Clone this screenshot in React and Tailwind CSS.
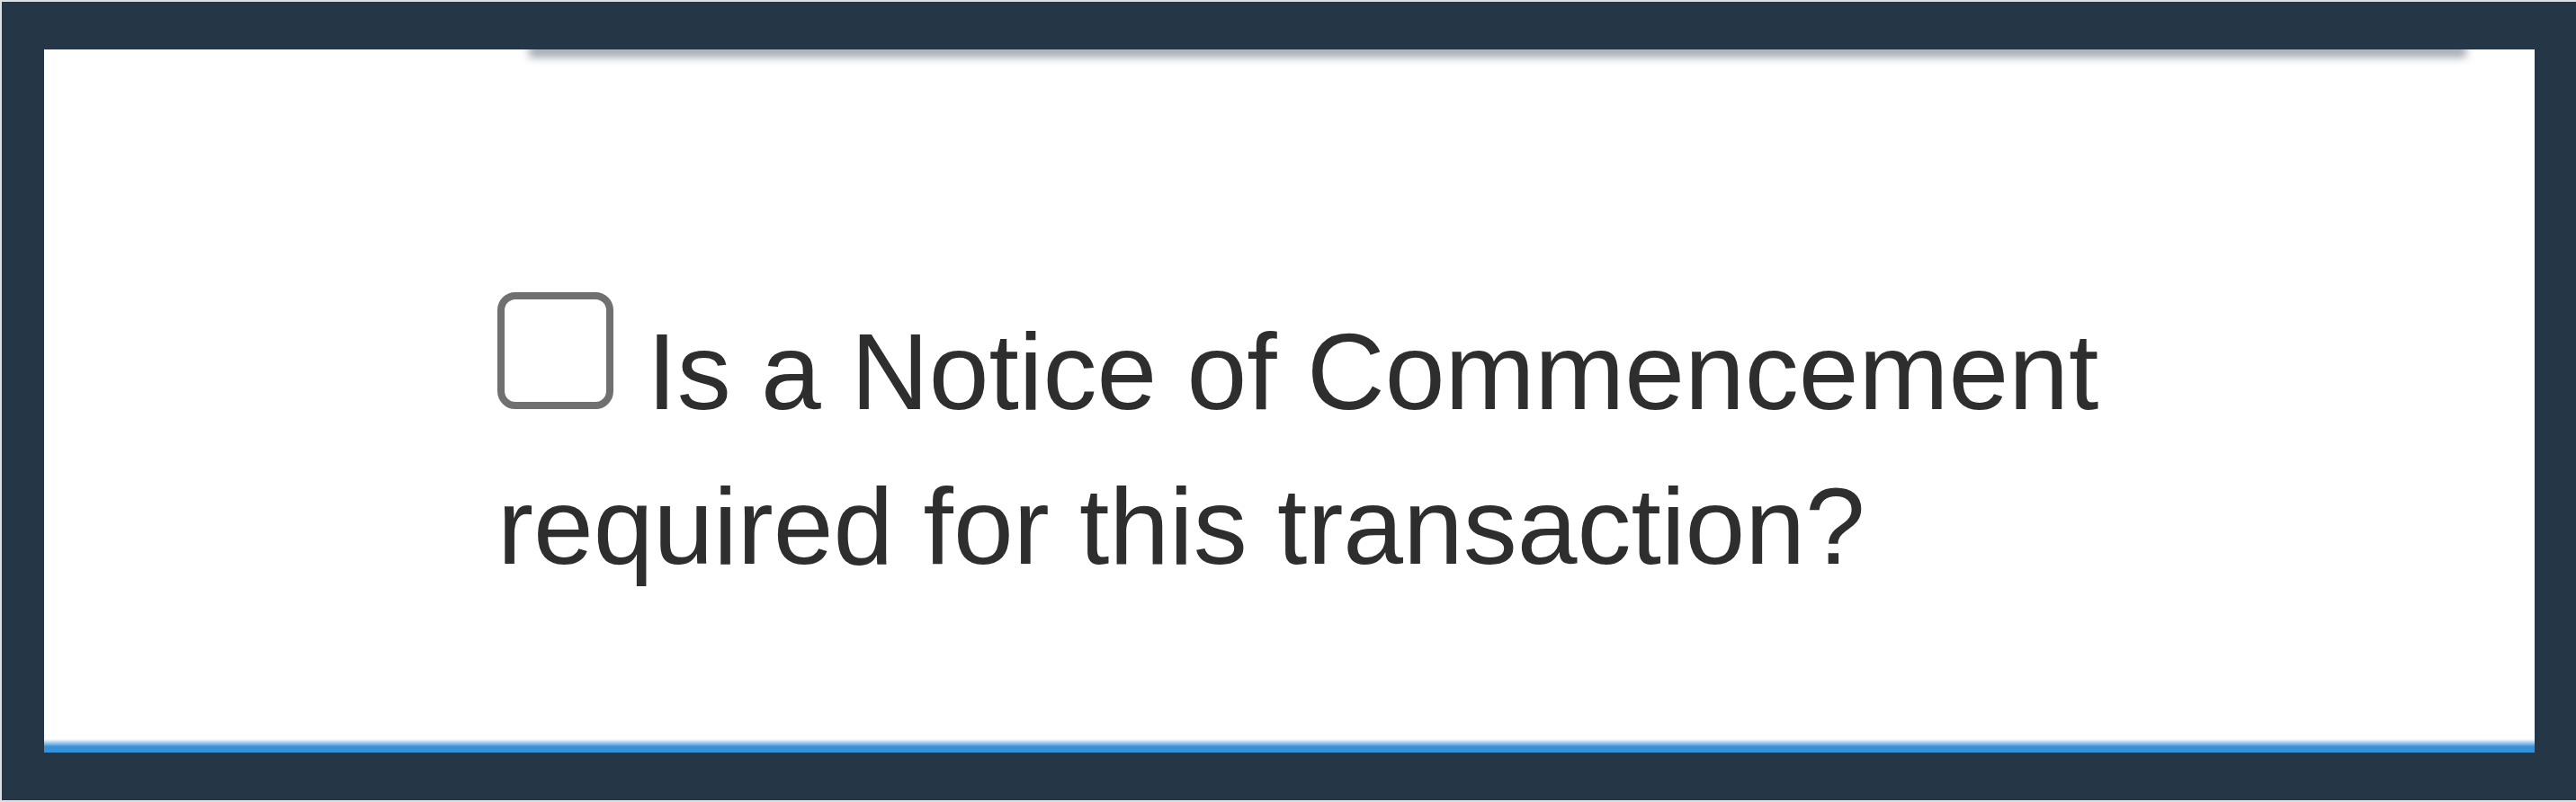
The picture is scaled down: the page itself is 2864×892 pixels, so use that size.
import React, { useState } from 'react';

const App = () => {
    const [checked, setChecked] = useState(false);

    return (
        <div className="w-[2864px] h-[892px] bg-[#253647] border-t-2 border-l-2 border-b-2 border-[#dde1e4] pl-[47px] pt-[53px] pr-[46px] pb-[53px]">
            <div className="h-[782px] bg-white overflow-hidden flex flex-col">
                <div className="ml-[539px] mr-[76px] h-[14px] -mt-[5px] bg-[#a3aab1] blur-[5px]" />

                <div className="flex-1 pl-[504px] pt-[261px]">
                    <p
                        className="w-[2000px] text-[120px] leading-[172px] text-[#2e2e2e] font-['Liberation_Sans',Arial,sans-serif] cursor-pointer"
                        onClick={() => setChecked(!checked)}
                    >
                        <span className="inline-block align-baseline w-[129px] h-[130px] mr-[4px] border-[8px] border-[#707070] rounded-[20px] bg-white">
                            {checked && (
                                <svg viewBox="0 0 24 24" className="w-full h-full" fill="none" stroke="#333" strokeWidth="3">
                                    <path d="M5 12l5 5 9-10" />
                                </svg>
                            )}
                        </span>{' '}
                        Is a Notice of Commencement required for this transaction?
                    </p>
                </div>

                <div className="h-[15px] bg-linear-to-b from-white via-[#3592d8] via-55% to-[#3592d8]" />
            </div>
        </div>
    );
};

export default App;
